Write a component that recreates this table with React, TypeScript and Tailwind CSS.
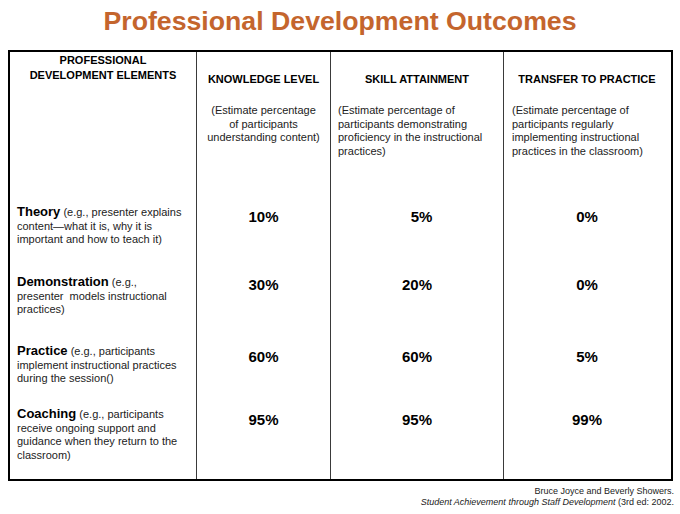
import React from 'react';

type Row = {
  name: string;
  detail: string;
  values: [string, string, string];
  height: string;
  pad: string;
};

const rows: Row[] = [
  {
    name: 'Theory',
    detail: ' (e.g., presenter explains content\u2014what it is, why it is important and how to teach it)',
    values: ['10%', '5%', '0%'],
    height: 'h-[70px]',
    pad: 'pt-[6px]',
  },
  {
    name: 'Demonstration',
    detail: ' (e.g., presenter\u00a0 models instructional practices)',
    values: ['30%', '20%', '0%'],
    height: 'h-[69px]',
    pad: 'pt-[4px]',
  },
  {
    name: 'Practice',
    detail: ' (e.g., participants implement instructional practices during the session()',
    values: ['60%', '60%', '5%'],
    height: 'h-[63px]',
    pad: 'pt-[7px]',
  },
  {
    name: 'Coaching',
    detail: ' (e.g., participants receive ongoing support and guidance when they return to the classroom)',
    values: ['95%', '95%', '99%'],
    height: 'h-[75px]',
    pad: 'pt-[7px]',
  },
];

const cell = 'border-l border-[#3a3a3a]';

const App: React.FC = () => {
  return (
    <div className="w-[680px] h-[514px] bg-white text-black font-['Liberation_Sans',Arial,sans-serif]">
      <h1 className="pt-[6px] text-center text-[26.7px] leading-[30px] font-bold text-[#c4652d]">
        Professional Development Outcomes
      </h1>

      <div className="ml-[8px] mt-[14px] w-[665px] border-[2.5px] border-black grid grid-cols-[186px_134px_173px_167px]">
        {/* header row */}
        <div className="h-[150px] pt-[1px] text-center text-[11px] leading-[15px] font-bold">
          PROFESSIONAL
          <br />
          DEVELOPMENT ELEMENTS
        </div>
        <div className={`${cell} h-[150px] pt-[20px] text-center`}>
          <div className="text-[11px] leading-[15px] font-bold">KNOWLEDGE LEVEL</div>
          <p className="mt-[17px] px-[10px] text-[11px] leading-[13.5px] text-[#222]">
            (Estimate percentage of participants understanding content)
          </p>
        </div>
        <div className={`${cell} h-[150px] pt-[20px]`}>
          <div className="text-center text-[11px] leading-[15px] font-bold">SKILL ATTAINMENT</div>
          <p className="mt-[17px] pl-[7px] pr-[14px] text-[11px] leading-[13.5px] text-[#222]">
            (Estimate percentage of participants demonstrating proficiency in the instructional practices)
          </p>
        </div>
        <div className={`${cell} h-[150px] pt-[20px]`}>
          <div className="text-center text-[11px] leading-[15px] font-bold">TRANSFER TO PRACTICE</div>
          <p className="mt-[17px] pl-[8px] pr-[14px] text-[11px] leading-[13.5px] text-[#222]">
            (Estimate percentage of participants regularly implementing instructional practices in the classroom)
          </p>
        </div>

        {/* data rows */}
        {rows.map((r) => (
          <React.Fragment key={r.name}>
            <div className={`${r.height} pt-[3px] pl-[7px] pr-[10px]`}>
              <p className="text-[11px] leading-[13.5px] text-[#222]">
                <span className="text-[13px] leading-[13px] font-bold text-black">{r.name}</span>
                {r.detail}
              </p>
            </div>
            {r.values.map((v, i) => (
              <div
                key={i}
                className={`${cell} ${r.height} ${r.pad} text-center text-[15px] leading-[18px] font-bold ${
                  i === 1 && v === '5%' ? 'pl-[9px]' : ''
                }`}
              >
                {v}
              </div>
            ))}
          </React.Fragment>
        ))}
      </div>

      <div className="mt-[5px] pr-[6px] text-right text-[9px] leading-[10.5px] text-[#222]">
        <div>Bruce Joyce and Beverly Showers.</div>
        <div>
          <span className="italic">Student Achievement through Staff Development</span> (3rd ed: 2002.
        </div>
      </div>
    </div>
  );
};

export default App;
